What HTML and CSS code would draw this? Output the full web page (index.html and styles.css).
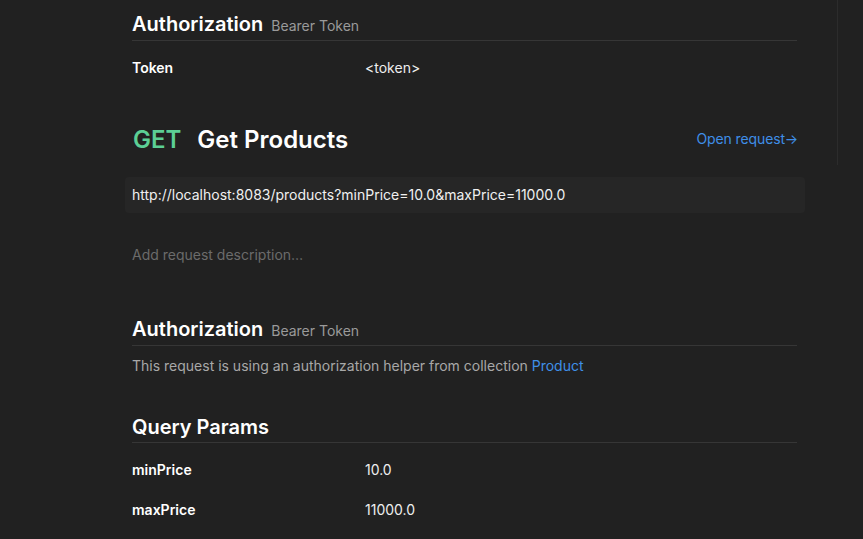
FILE: index.html
```html
<!DOCTYPE html>
<html>
<head>
<meta charset="utf-8">
<link rel="stylesheet" href="styles.css">
</head>
<body>
<div class="page">
  <main class="doc">
    <section class="auth first">
      <h2 class="sec-title">Authorization <span class="sub">Bearer Token</span></h2>
      <div class="kv"><span class="k">Token</span><span class="v">&lt;token&gt;</span></div>
    </section>

    <section class="request">
      <div class="req-head">
        <h1 class="req-title"><span class="method">GET</span><span class="name">Get Products</span></h1>
        <a class="open-link">Open request<span class="arrow">→</span></a>
      </div>
      <div class="url">http://localhost:8083/products?minPrice=10.0&amp;maxPrice=11000.0</div>
      <p class="desc">Add request description…</p>
    </section>

    <section class="auth">
      <h2 class="sec-title">Authorization <span class="sub">Bearer Token</span></h2>
      <p class="note">This request is using an authorization helper from collection <a class="link">Product</a></p>
    </section>

    <section class="params">
      <h2 class="sec-title">Query Params</h2>
      <div class="kv"><span class="k">minPrice</span><span class="v">10.0</span></div>
      <div class="kv"><span class="k">maxPrice</span><span class="v">11000.0</span></div>
    </section>
  </main>
  <aside class="rail"><div class="rail-line"></div></aside>
</div>
</body>
</html>
```

FILE: styles.css
```css
* { box-sizing: border-box; }
html, body { margin: 0; padding: 0; background: #212121; }
body {
  font-family: Inter, "Noto Sans", sans-serif;
  color: #f0f0f0;
  font-size: 14px;
  overflow: hidden;
  height: 539px;
}
.page { display: flex; height: 539px; }
.doc {
  width: 837px;
  flex: none;
  padding: 0 40px 0 132px;
}
.rail { flex: 1; }
.rail-line { width: 1px; height: 165px; background: #2c2c2c; }

.sec-title {
  margin: 0;
  font-size: 20px;
  font-weight: 600;
  color: #ffffff;
  line-height: 24px;
  padding-bottom: 4px;
  border-bottom: 1px solid #363636;
}
.sub { font-size: 14px; line-height: 14px; font-weight: 400; color: #9a9a9a; margin-left: 3px; }
.auth.first { padding-top: 12px; }

.kv { display: flex; line-height: 20px; }
.first .kv { margin-top: 17px; }
.k { width: 233px; font-weight: 600; color: #ffffff; }
.v { color: #eeeeee; }

.request { margin-top: 47px; }
.req-head { display: flex; justify-content: space-between; align-items: center; height: 30px; }
.req-title { margin: 0; font-size: 24px; font-weight: 600; line-height: 30px; }
.method { color: #5ccf95; margin-right: 16px; margin-left: 1px; }
.name { color: #ffffff; }
.open-link { color: #3f8fe8; font-size: 14px; margin-right: -1px; margin-top: -3px; letter-spacing: -0.1px; }
.arrow { margin-left: 0; }

.url {
  margin: 22px -8px 0 -7px;
  background: #262626;
  border-radius: 4px;
  padding: 8px 7px;
  line-height: 20px;
  color: #f0f0f0;
}
.desc { margin: 32px 0 0; color: #6b6b6b; line-height: 20px; }

.auth:not(.first) { margin-top: 52px; }
.note { margin: 10px 0 0; color: #a8a8a8; line-height: 20px; }
.link { color: #3f8fe8; }

.params { margin-top: 39px; }
.params .sec-title { padding-bottom: 3px; }
.params .kv { margin-top: 17px; }
.params .kv + .kv { margin-top: 20px; }
```
